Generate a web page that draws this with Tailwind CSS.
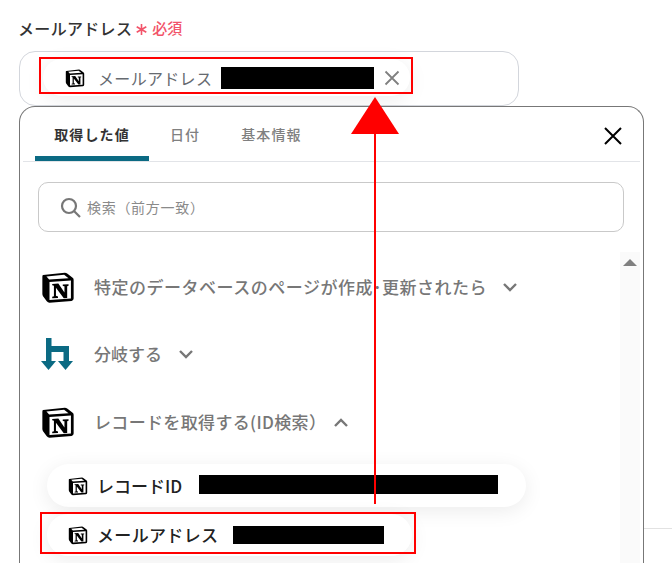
<!DOCTYPE html>
<html lang="ja">
<head>
  <meta charset="UTF-8">
  <title>メールアドレス</title>
  <script src="https://cdn.jsdelivr.net/npm/@tailwindcss/browser@4"></script>
</head>
<body>
  <svg class="hidden">
    <symbol id="notion" viewBox="0 0 100 100">
      <path fill="#000" d="M6 15 L70 8 Q74 8 78 11 L93 23 Q96 25 96 29 L96 84 Q96 90 90 91 L25 96 Q20 96 17 92 L6 77 Q4 74 4 70 V20 Q4 16 6 15Z"/>
      <path fill="#fff" d="M25 35 L88 31 V84 L25 88Z"/>
      <path fill="#fff" d="M16 19 L68 14 L81 24 L24 28Z"/>
      <path fill="#000" d="M33 41 L51 40 L69 66 V48 L64 47 V43 L81 42 V46 L77 48 V82 L67 83 L44 52 V76 L50 78 V82 L33 83 V79 L38 77 V46 L33 45Z"/>
    </symbol>
  </svg>

  <div class="relative w-[672px] h-[563px] overflow-hidden bg-white font-['Noto_Sans_CJK_JP','Noto_Sans',sans-serif]">
    <!-- field -->
    <div class="pl-[19px] pt-[17px]">
      <div class="flex items-center h-[22px]">
        <span class="-ml-px text-[16px] font-medium tracking-[0.02em] text-[#333333]">メールアドレス</span>
        <svg class="ml-[4px] mt-[3px] w-[11px] h-[11px]" viewBox="0 0 11 11" fill="none" stroke="#f2546a" stroke-width="1.600"><path d="M5.500 0V11M.7 2.700 10.300 8.300M10.300 2.700 .7 8.300"/></svg>
        <span class="ml-[5px] text-[15px] font-medium text-[#f2546a]">必須</span>
      </div>
      <div class="mt-[12px] w-[500px] h-[55px] rounded-[16px] border border-[#d3d6dc] bg-white">
        <div class="mt-[7px] ml-[23px] w-[367px] h-[37px] rounded-full bg-white shadow-[0_4px_20px_rgba(0,0,0,0.08)] flex items-center pl-[22px]">
          <svg class="w-[20px] h-[20px]"><use href="#notion"/></svg>
          <span class="ml-[13px] w-[123px] text-[16px] tracking-[0.02em] text-[#666a70]">メールアドレス</span>
          <span class="w-[153px] h-[22px] bg-black"></span>
          <svg class="ml-[10px] w-[16px] h-[16px]" viewBox="0 0 16 16" fill="none" stroke="#808080" stroke-width="1.8"><path d="M1.500 1.500 14.500 14.500M14.500 1.500 1.500 14.500"/></svg>
        </div>
      </div>
    </div>

    <!-- popup -->
    <div class="ml-[19px] w-[625px] h-[470px] rounded-t-[16px] border border-b-0 border-[#777777] bg-white">
      <div class="mx-[3px] h-[55px] border-b border-[#e2e4e8] flex items-start relative">
        <div class="ml-[12px] w-[114px] h-[54px] pt-[6px] border-b-[5px] border-[#0b6a83] rounded-t-[2px] flex items-center justify-center text-[14px] font-semibold tracking-[0.08em] text-[#333333]">取得した値</div>
        <div class="ml-[21px] h-[54px] pt-[6px] pb-[5px] flex items-center text-[14px] font-medium tracking-[0.08em] text-[#808080]">日付</div>
        <div class="ml-[41px] h-[54px] pt-[6px] pb-[5px] flex items-center text-[14px] font-medium tracking-[0.08em] text-[#808080]">基本情報</div>
        <svg class="ml-auto mr-[18px] mt-[20px] w-[18px] h-[18px]" viewBox="0 0 18 18" fill="none" stroke="#000" stroke-width="2"><path d="M1 1 17 17M17 1 1 17"/></svg>
      </div>

      <div class="ml-[18px] mt-[20px] w-[586px] h-[50px] rounded-[10px] border border-[#c9c9c9] flex items-center pl-[21px]">
        <svg class="w-[21px] h-[21px]" viewBox="0 0 21 21" fill="none" stroke="#777777" stroke-width="2.200"><circle cx="9" cy="9" r="7"/><path d="M14 14 20 20"/></svg>
        <span class="ml-[6px] text-[14px] tracking-[0.05em] text-[#8a8a8a]">検索（前方一致）</span>
      </div>

      <div class="flex mt-[20px] h-[312px]">
        <div class="flex-1 min-w-0 relative">
          <div class="ml-[21px] mt-[17px] h-[36px] flex items-center">
            <svg class="w-[34px] h-[36px]"><use href="#notion"/></svg>
            <span class="ml-[19px] text-[17px] font-medium tracking-[0.03em] text-[#777777]">特定のデータベースのページが作成･更新されたら</span>
            <svg class="ml-[16px] w-[14px] h-[9px]" viewBox="0 0 14 9" fill="none" stroke="#777777" stroke-width="2.400"><path d="M1 1 7 7 13 1"/></svg>
          </div>
          <div class="ml-[21px] mt-[33px] h-[32px] flex items-center">
            <svg class="w-[32px] h-[32px]" viewBox="0 0 32 32" fill="#0b6a83"><path d="M5 0h5.500v8H28v16h-5.500V14H10.500v10H5Z"/><path d="M0 23h15l-7.500 9Z"/><path d="M17 23h15l-7.500 9Z"/></svg>
            <span class="ml-[21px] text-[17px] font-medium text-[#777777]">分岐する</span>
            <svg class="ml-[17px] w-[14px] h-[9px]" viewBox="0 0 14 9" fill="none" stroke="#777777" stroke-width="2.400"><path d="M1 1 7 7 13 1"/></svg>
          </div>
          <div class="ml-[21px] mt-[34px] h-[36px] flex items-center">
            <svg class="w-[34px] h-[36px]"><use href="#notion"/></svg>
            <span class="ml-[19px] text-[17px] font-medium tracking-[0.02em] text-[#777777]">レコードを取得する(ID検索）</span>
            <svg class="ml-[8px] w-[14px] h-[9px]" viewBox="0 0 14 9" fill="none" stroke="#777777" stroke-width="2.400"><path d="M1 8 7 2 13 8"/></svg>
          </div>
          <div class="ml-[27px] mt-[24px] w-[479px] h-[43px] rounded-full bg-white shadow-[0_4px_20px_rgba(0,0,0,0.08)] flex items-center pl-[21px]">
            <svg class="w-[20px] h-[20px]"><use href="#notion"/></svg>
            <span class="ml-[9px] w-[102px] text-[17px] font-medium text-[#222222]">レコードID</span>
            <span class="w-[299px] h-[19px] bg-black -mt-[2px]"></span>
          </div>
          <div class="ml-[27px] mt-[7px] w-[365px] h-[42px] rounded-full bg-white shadow-[0_4px_20px_rgba(0,0,0,0.08)] flex items-center pl-[21px]">
            <svg class="w-[20px] h-[20px]"><use href="#notion"/></svg>
            <span class="ml-[9px] w-[136px] text-[17px] font-medium tracking-[0.02em] text-[#222222]">メールアドレス</span>
            <span class="w-[151px] h-[18px] bg-black"></span>
          </div>
        </div>
        <div class="w-[20px] mr-[3px] bg-[#fafafa] flex justify-center pt-[7px]">
          <div class="w-0 h-0 border-x-[7px] border-x-transparent border-b-[7px] border-b-[#808080]"></div>
        </div>
      </div>
    </div>

    <!-- page line behind the popup -->
    <div class="absolute left-[644px] top-[528px] w-[28px] h-px bg-[#e2e2e2]"></div>

    <!-- annotations -->
    <div class="absolute left-[39px] top-[57px] w-[374px] h-[37px] border-2 border-[#ff0000]"></div>
    <div class="absolute left-[40px] top-[512px] w-[376px] h-[42px] border-2 border-[#ff0000]"></div>
    <div class="absolute left-[374px] top-[130px] w-[2px] h-[374px] bg-[#ff0000]"></div>
    <div class="absolute left-[351px] top-[97px] w-0 h-0 border-x-[24.500px] border-x-transparent border-b-[37px] border-b-[#ff0000]"></div>
  </div>
</body>
</html>
